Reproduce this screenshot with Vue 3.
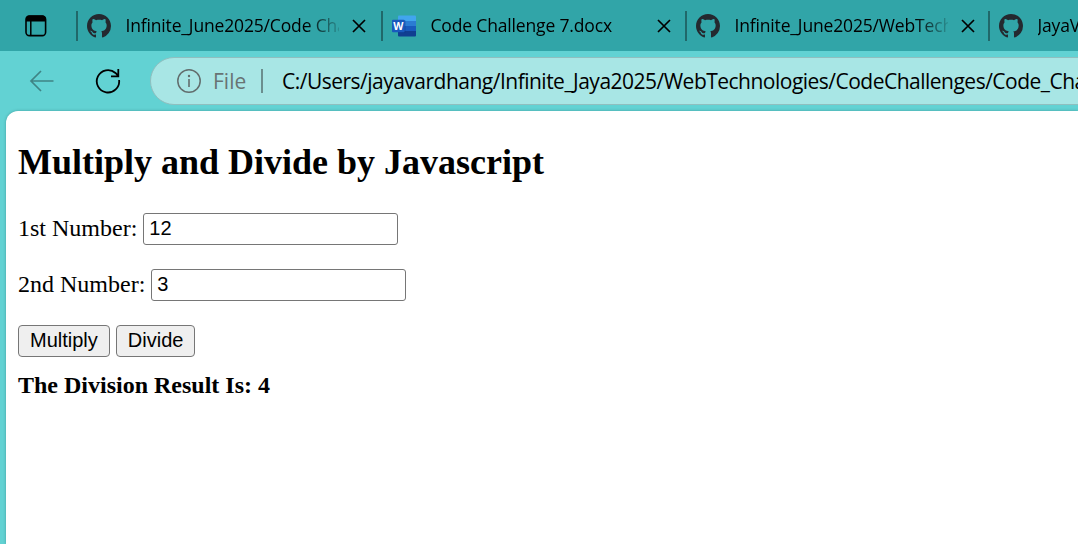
<script setup>
import { ref } from 'vue'

const tabs = [
  { title: 'Infinite_June2025/Code Challenges', icon: 'github', width: 305 },
  { title: 'Code Challenge 7.docx', icon: 'word', width: 304 },
  { title: 'Infinite_June2025/WebTechnologies', icon: 'github', width: 303 },
  { title: 'JayaVardhan', icon: 'github', width: 304 },
]
const first = ref('12')
const second = ref('3')
const result = ref('The Division Result Is: 4')

function multiply() {
  result.value = 'The Multiplication Result Is: ' + Number(first.value) * Number(second.value)
}
function divide() {
  result.value = 'The Division Result Is: ' + Number(first.value) / Number(second.value)
}
</script>

<template>
  <div class="browser">
    <div class="tabstrip">
      <div class="tab-actions">
        <svg width="22" height="22" viewBox="0 0 22 22">
          <rect x="1" y="1" width="19.6" height="19.6" rx="3.4" fill="none" stroke="#000" stroke-width="1.6" />
          <path d="M1 6.600V4a3.400 3.400 0 0 1 3.400-3.400h13A3.400 3.400 0 0 1 20.800 4v2.600z" fill="#000" />
          <path d="M5.800 6v14.600" stroke="#000" stroke-width="1.500" />
        </svg>
      </div>
      <div v-for="(tab, i) in tabs" :key="i" class="tab" :style="{ width: tab.width + 'px' }">
        <svg v-if="tab.icon === 'github'" class="favicon" width="24" height="24" viewBox="0 0 16 16">
          <path fill="#24292f" d="M8 0C3.58 0 0 3.58 0 8c0 3.54 2.29 6.53 5.47 7.59.4.07.55-.17.55-.38 0-.19-.01-.82-.01-1.49-2.01.37-2.53-.49-2.69-.94-.09-.23-.48-.94-.82-1.13-.28-.15-.68-.52-.01-.53.63-.01 1.08.58 1.23.82.72 1.21 1.87.87 2.33.66.07-.52.28-.87.51-1.07-1.78-.2-3.64-.89-3.64-3.95 0-.87.31-1.59.82-2.15-.08-.2-.36-1.02.08-2.12 0 0 .67-.21 2.2.82.64-.18 1.32-.27 2-.27s1.36.09 2 .27c1.53-1.04 2.2-.82 2.2-.82.44 1.1.16 1.92.08 2.12.51.56.82 1.27.82 2.15 0 3.07-1.87 3.75-3.65 3.95.29.25.54.73.54 1.48 0 1.07-.01 1.93-.01 2.2 0 .21.15.46.55.38A8.01 8.01 0 0 0 16 8c0-4.42-3.58-8-8-8z" />
        </svg>
        <svg v-else class="favicon" width="24" height="24" viewBox="0 0 24 24">
          <path fill="#41a5ee" d="M7 1.500h16a1 1 0 0 1 1 1V7H6V2.500a1 1 0 0 1 1-1z" />
          <path fill="#2b7cd3" d="M6 7h18v5H6z" />
          <path fill="#185abd" d="M6 12h18v5H6z" />
          <path fill="#103f91" d="M6 17h18v4.500a1 1 0 0 1-1 1H7a1 1 0 0 1-1-1z" />
          <path fill="#0b3a82" opacity=".4" d="M6 6h6.500a1 1 0 0 1 1 1v11.500H6z" />
          <rect y="5.700" width="12.600" height="12.600" rx="1" fill="#185abd" />
          <text x="6.300" y="15.700" text-anchor="middle" font-family="Open Sans, sans-serif" font-weight="700" font-size="10.500" fill="#fff">W</text>
        </svg>
        <span class="title">{{ tab.title }}</span>
        <svg class="close" width="14" height="14" viewBox="0 0 14 14">
          <path d="M1 1l12 12M13 1L1 13" stroke="#000" stroke-width="1.700" />
        </svg>
      </div>
    </div>

    <div class="toolbar">
      <svg class="back" width="26" height="22" viewBox="0 0 26 22">
        <path d="M24.500 11H2M12 1L2 11l10 10" fill="none" stroke="#3f8485" stroke-width="1.700" />
      </svg>
      <svg class="reload" width="26" height="26" viewBox="0 0 26 26">
        <path d="M24.100 12A11.200 11.200 0 1 1 20.500 5L23 7.700M23.300 1v7.300H16" fill="none" stroke="#000" stroke-width="1.800" />
      </svg>
      <div class="address">
        <svg width="24" height="24" viewBox="0 0 24 24">
          <circle cx="12" cy="12" r="11.200" fill="none" stroke="#626d6d" stroke-width="1.500" />
          <path d="M12 10v8" stroke="#626d6d" stroke-width="1.600" />
          <circle cx="12" cy="7" r="1.200" fill="#626d6d" />
        </svg>
        <span class="scheme">File</span>
        <span class="divider"></span>
        <span class="url">C:/Users/jayavardhang/Infinite_Jaya2025/WebTechnologies/CodeChallenges/Code_Challenge</span>
      </div>
    </div>

    <main class="page">
      <h2>Multiply and Divide by Javascript</h2>
      <div class="row">
        <label for="first">1st Number:</label>
        <input id="first" v-model="first" type="text" />
      </div>
      <div class="row">
        <label for="second">2nd Number:</label>
        <input id="second" v-model="second" type="text" />
      </div>
      <div class="buttons">
        <button @click="multiply">Multiply</button>
        <button @click="divide">Divide</button>
      </div>
      <p class="result">{{ result }}</p>
    </main>
  </div>
</template>

<style>
body {
  margin: 0;
  overflow: hidden;
}
</style>

<style scoped>
.browser {
  width: 100vw;
  height: 100vh;
  overflow: hidden;
  display: flex;
  flex-direction: column;
  background: #62d2d3;
  font-family: "Open Sans", "Noto Sans", sans-serif;
  color: #000;
}
.tabstrip {
  flex: 0 0 51px;
  display: flex;
  align-items: center;
  background: #31a5a8;
}
.tab-actions {
  flex: 0 0 76px;
  box-sizing: border-box;
  padding-left: 25px;
  display: flex;
}
.tab {
  flex: none;
  box-sizing: border-box;
  height: 30px;
  border-left: 2px solid #20686a;
  display: flex;
  align-items: center;
  padding-left: 9px;
}
.favicon {
  flex: none;
}
.title {
  width: 213px;
  margin-left: 14.500px;
  overflow: hidden;
  white-space: nowrap;
  font-size: 17.5px;
  line-height: 28px;
  letter-spacing: -0.16px;
  position: relative;
  top: -1px;
  -webkit-mask-image: linear-gradient(to right, #000 180px, transparent 218px);
  mask-image: linear-gradient(to right, #000 180px, transparent 218px);
}
.close {
  flex: none;
  margin-left: 13px;
}
.toolbar {
  flex: 0 0 60px;
  display: flex;
  align-items: center;
  overflow: hidden;
}
.back {
  flex: none;
  margin-left: 29px;
}
.reload {
  flex: none;
  margin-left: 40px;
}
.address {
  flex: none;
  box-sizing: border-box;
  width: 1000px;
  height: 48px;
  margin-left: 29px;
  border: 1px solid #8fbfbf;
  border-radius: 24px;
  background: #a8e6e5;
  display: flex;
  align-items: center;
  padding-left: 26px;
  font-size: 21px;
  white-space: nowrap;
}
.address svg {
  flex: none;
}
.scheme {
  width: 31px;
  margin-left: 12px;
  color: #687373;
}
.divider {
  flex: none;
  width: 2px;
  height: 24px;
  margin-left: 17px;
  background: #6b8e8e;
}
.url {
  margin-left: 19px;
  letter-spacing: -0.51px;
}
.page {
  flex: 1;
  margin-left: 6px;
  padding: 0 12px;
  border-top-left-radius: 12px;
  background: #fff;
  box-shadow: 0 0 3px rgba(0, 60, 60, 0.35);
  font-family: "Liberation Serif", "Times New Roman", serif;
  font-size: 24px;
}
h2 {
  margin: 0;
  padding-top: 31px;
  font-size: 36px;
  line-height: 41px;
}
.row {
  display: flex;
  align-items: center;
  gap: 6px;
  height: 32px;
  margin-top: 24px;
}
.row label {
  padding-bottom: 2px;
}
h2 + .row {
  margin-top: 30px;
}
input {
  box-sizing: border-box;
  width: 255px;
  height: 32px;
  padding: 0 5px 1px;
  border: 1px solid #767676;
  border-radius: 3px;
  background: #fff;
  font: 20px "Liberation Sans", Arial, sans-serif;
  color: #000;
}
.buttons {
  display: flex;
  gap: 6px;
  margin-top: 24px;
}
button {
  height: 32px;
  padding: 0 11px 2px;
  border: 1px solid #767676;
  border-radius: 4px;
  background: #efefef;
  font: 20px "Liberation Sans", Arial, sans-serif;
  color: #000;
}
.result {
  margin: 15px 0 0;
  font-weight: bold;
  line-height: 27px;
}
</style>
